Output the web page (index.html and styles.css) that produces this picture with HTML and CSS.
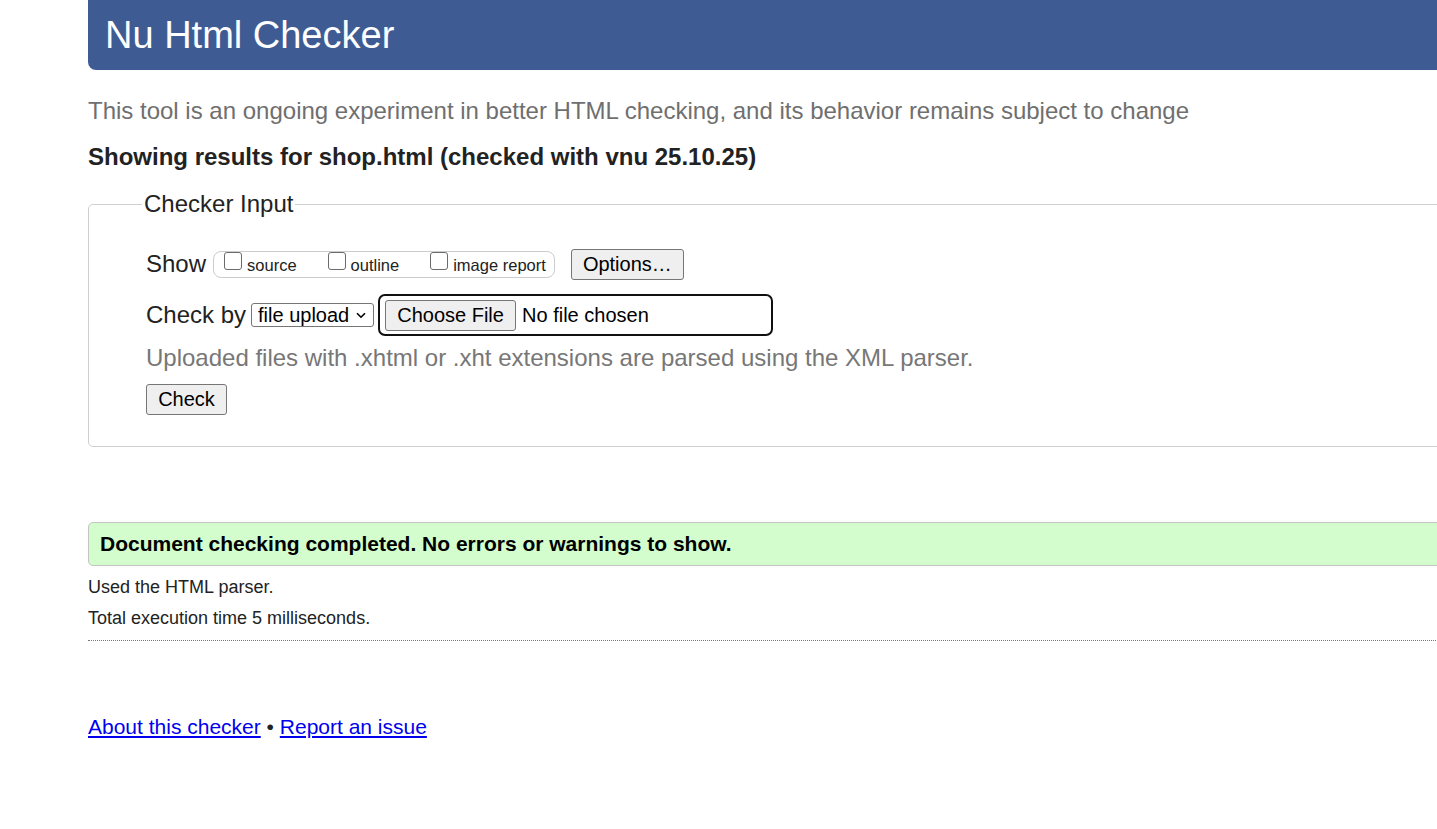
FILE: index.html
```html
<!DOCTYPE html>
<html lang="en">
<head>
<meta charset="utf-8">
<title>Showing results for shop.html - Nu Html Checker</title>
<link rel="stylesheet" href="styles.css">
</head>
<body>
<div class="page">
  <h1 class="masthead">Nu Html Checker</h1>
  <p class="intro">This tool is an ongoing experiment in better HTML checking, and its behavior remains subject to change</p>
  <p class="results-title">Showing results for shop.html (checked with vnu 25.10.25)</p>
  <fieldset class="input-box">
    <legend class="legend">Checker Input</legend>
    <div class="row show-row">
      <span class="row-label">Show</span>
      <span class="show-group">
        <label class="opt"><span class="cb"></span>source</label>
        <label class="opt"><span class="cb"></span>outline</label>
        <label class="opt"><span class="cb"></span>image report</label>
      </span>
      <span class="btn options-btn">Options…</span>
    </div>
    <div class="row check-row">
      <span class="row-label">Check by</span>
      <span class="select">file upload<svg class="chev" width="10" height="7" viewBox="0 0 10 7"><path d="M1 1.2 L5 5.2 L9 1.2" fill="none" stroke="#000" stroke-width="1.6"/></svg></span>
      <span class="file-wrap">
        <span class="btn file-btn">Choose File</span>
        <span class="file-text">No file chosen</span>
      </span>
    </div>
    <p class="note">Uploaded files with .xhtml or .xht extensions are parsed using the XML parser.</p>
    <span class="btn check-btn">Check</span>
  </fieldset>
  <div class="success">Document checking completed. No errors or warnings to show.</div>
  <p class="meta meta-first">Used the HTML parser.</p>
  <p class="meta">Total execution time 5 milliseconds.</p>
  <hr class="sep">
  <p class="footer"><a href="#" class="link">About this checker</a> • <a href="#" class="link">Report an issue</a></p>
</div>
</body>
</html>
```

FILE: styles.css
```css
html, body {
  margin: 0;
  padding: 0;
  overflow: hidden;
  background: #fff;
}
body {
  font-family: "Liberation Sans", Arial, sans-serif;
  color: #222;
  height: 829px;
}
.page {
  margin-left: 88px;
  width: 1500px;
}
.masthead {
  margin: 0;
  height: 70px;
  box-sizing: border-box;
  background: #3e5c93;
  color: #fff;
  font-weight: normal;
  font-size: 38px;
  line-height: 70px;
  padding-left: 17px;
  border-bottom-left-radius: 8px;
}
.intro {
  margin: 26px 0 0;
  font-size: 24px;
  line-height: 30px;
  color: #6f6f6f;
}
.results-title {
  margin: 16px 0 0;
  font-size: 24px;
  line-height: 30px;
  font-weight: bold;
  color: #222;
}
.input-box {
  margin: 18px 0 0;
  padding: 29px 0 31px 57px;
  border: 1px solid #cfcfcf;
  border-radius: 5px;
}
.legend {
  font-size: 24px;
  padding: 0 2px;
  margin-left: -4px;
  color: #222;
}
.row {
  display: flex;
  align-items: center;
}
.row-label {
  font-size: 24px;
  color: #222;
}
.show-row {
  height: 34px;
}
.show-group {
  display: inline-flex;
  align-items: center;
  margin-left: 7px;
  height: 27px;
  box-sizing: border-box;
  padding: 0 8px 0 10px;
  border: 1px solid #cccccc;
  border-radius: 8px;
  gap: 31px;
}
.opt {
  display: inline-flex;
  align-items: center;
  font-size: 16.5px;
  color: #222;
  position: relative;
  top: 1px;
}
.cb {
  width: 18px;
  height: 18px;
  box-sizing: border-box;
  border: 1.5px solid #6b6b6b;
  border-radius: 3px;
  margin-right: 5px;
  position: relative;
  top: -4px;
  background: #fff;
}
.btn {
  display: inline-flex;
  align-items: center;
  justify-content: center;
  box-sizing: border-box;
  background: #efefef;
  border: 1px solid #767676;
  border-radius: 3px;
  font-size: 20px;
  color: #000;
}
.options-btn {
  margin-left: 16px;
  width: 113px;
  height: 31px;
}
.check-row {
  margin-top: 13px;
  height: 42px;
}
.select {
  display: inline-flex;
  align-items: center;
  margin-left: 5px;
  height: 24px;
  width: 123px;
  box-sizing: border-box;
  border: 1px solid #767676;
  border-radius: 3px;
  padding: 0 0 0 6px;
  font-size: 20px;
  color: #000;
  gap: 6px;
}
.chev {
  margin-left: 1px;
}
.file-wrap {
  display: inline-flex;
  align-items: center;
  margin-left: 4px;
  width: 395px;
  height: 42px;
  box-sizing: border-box;
  border: 2px solid #101010;
  border-radius: 7px;
  padding-left: 5px;
}
.file-btn {
  width: 131px;
  height: 31px;
}
.file-text {
  margin-left: 6px;
  font-size: 20px;
  color: #000;
}
.note {
  margin: 4px 0 0;
  font-size: 24px;
  line-height: 36px;
  color: #777;
}
.check-btn {
  margin-top: 8px;
  width: 81px;
  height: 31px;
}
.success {
  margin-top: 75px;
  height: 44px;
  box-sizing: border-box;
  background: #d3fdcd;
  border: 1px solid #c4c4c4;
  border-radius: 5px;
  padding-left: 11px;
  font-size: 21px;
  font-weight: bold;
  line-height: 42px;
  color: #000;
}
.meta {
  margin: 10px 0 0;
  font-size: 18px;
  line-height: 21px;
  color: #222;
}
.meta-first {
  margin-top: 11px;
}
.sep {
  margin: 11px 0 0;
  border: 0;
  border-top: 1px dotted #777;
  height: 0;
}
.footer {
  margin: 74px 0 0;
  font-size: 21px;
  line-height: 24px;
  color: #222;
}
.link {
  color: #0000ee;
  text-decoration: underline;
}
```
